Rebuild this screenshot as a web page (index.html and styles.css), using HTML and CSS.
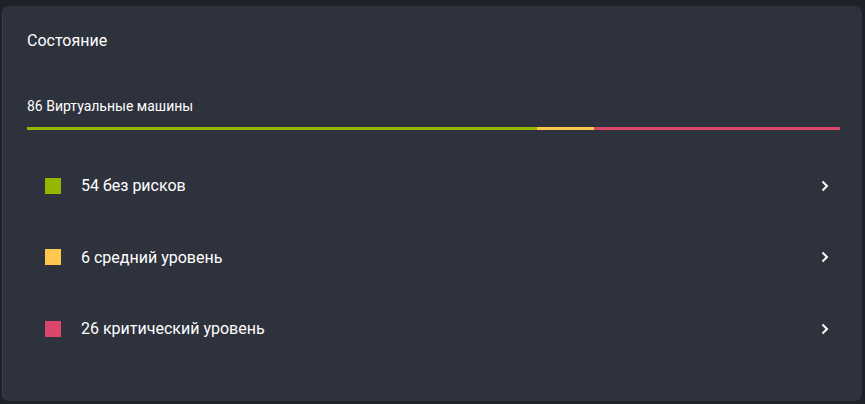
FILE: index.html
```html
<!DOCTYPE html>
<html lang="ru">
<head>
    <meta charset="UTF-8">
    <meta name="viewport" content="width=device-width, initial-scale=1.0">
    <title>Состояние</title>
    <link rel="stylesheet" href="styles.css">
</head>
<body>
    <div class="card">
        <header class="card-title">Состояние</header>
        <div class="total">86 Виртуальные машины</div>
        <div class="bar">
            <div class="bar-part green" style="flex: 54"></div>
            <div class="bar-part yellow" style="flex: 6"></div>
            <div class="bar-part red" style="flex: 26"></div>
        </div>
        <ul class="status-list">
            <li class="status-row">
                <span class="marker green"></span>
                <span class="label">54 без рисков</span>
                <svg class="chevron" width="10" height="12" viewBox="0 0 10 12"><path d="M2.5 1.5 L7 6 L2.5 10.5" fill="none" stroke="#ffffff" stroke-width="2"/></svg>
            </li>
            <li class="status-row">
                <span class="marker yellow"></span>
                <span class="label">6 средний уровень</span>
                <svg class="chevron" width="10" height="12" viewBox="0 0 10 12"><path d="M2.5 1.5 L7 6 L2.5 10.5" fill="none" stroke="#ffffff" stroke-width="2"/></svg>
            </li>
            <li class="status-row">
                <span class="marker red"></span>
                <span class="label">26 критический уровень</span>
                <svg class="chevron" width="10" height="12" viewBox="0 0 10 12"><path d="M2.5 1.5 L7 6 L2.5 10.5" fill="none" stroke="#ffffff" stroke-width="2"/></svg>
            </li>
        </ul>
    </div>
</body>
</html>
```

FILE: styles.css
```css
body {
    font-family: Roboto, "Noto Sans", sans-serif;
    background-color: #1f2129;
    margin: 0;
    padding: 6px 3px 3px 2px;
    color: #ffffff;
}

.card {
    background-color: #2e323c;
    border-left: 1px solid #3a3e49;
    border-radius: 7px;
    height: 395px;
    box-sizing: border-box;
    padding: 0 22px 0 24px;
}

.card-title {
    font-size: 16px;
    padding-top: 25px;
    line-height: 20px;
}

.total {
    font-size: 14px;
    margin-top: 46px;
    line-height: 18px;
}

.bar {
    display: flex;
    height: 3px;
    margin-top: 12px;
}

.green {
    background-color: #94b800;
}

.yellow {
    background-color: #ffc74d;
}

.red {
    background-color: #dc466d;
}

.status-list {
    list-style: none;
    margin: 0;
    padding: 0;
    margin-top: 20px;
}

.status-row {
    display: flex;
    align-items: center;
    height: 71.5px;
}

.marker {
    width: 16px;
    height: 16px;
    margin-left: 18px;
    margin-right: 20px;
}

.label {
    flex: 1;
    font-size: 16px;
}

.chevron {
    margin-right: 10px;
}
```
